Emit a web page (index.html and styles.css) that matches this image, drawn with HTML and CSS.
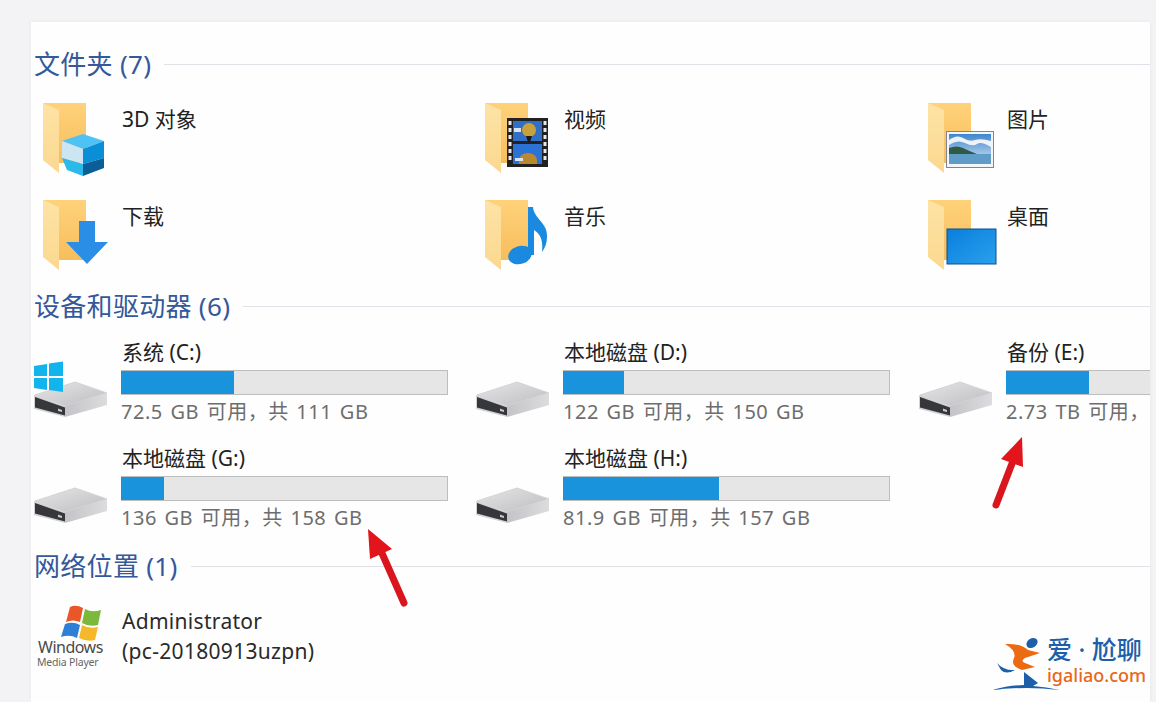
FILE: index.html
```html
<!DOCTYPE html>
<html lang="zh-CN">
<head>
    <meta charset="UTF-8">
    <title>此电脑</title>
    <link rel="stylesheet" href="styles.css">
</head>
<body>
    <svg class="defs" aria-hidden="true">
        <defs>
            <linearGradient id="folder-back" x1="0" y1="0" x2="0" y2="1">
                <stop offset="0" stop-color="#ffd27a"/>
                <stop offset="1" stop-color="#f7bd5c"/>
            </linearGradient>
            <linearGradient id="folder-front" x1="0" y1="0" x2="0" y2="1">
                <stop offset="0" stop-color="#fde3a6"/>
                <stop offset="1" stop-color="#fbd88f"/>
            </linearGradient>
            <linearGradient id="screen" x1="0" y1="0" x2="1" y2="1">
                <stop offset="0" stop-color="#0a7fdc"/>
                <stop offset="1" stop-color="#2aa0ee"/>
            </linearGradient>
            <linearGradient id="sky" x1="0" y1="0" x2="0" y2="1">
                <stop offset="0" stop-color="#3f86cf"/>
                <stop offset="1" stop-color="#d6e6f2"/>
            </linearGradient>
            <linearGradient id="drive-top" x1="0" y1="0" x2="1" y2="1">
                <stop offset="0" stop-color="#e6e6e8"/>
                <stop offset="1" stop-color="#bdbdc1"/>
            </linearGradient>
            <linearGradient id="drive-side" x1="0" y1="0" x2="1" y2="0">
                <stop offset="0" stop-color="#c4c4c8"/>
                <stop offset="1" stop-color="#dcdcde"/>
            </linearGradient>
            <symbol id="folder" viewBox="0 0 88 80">
                <path d="M9 5H52V65H24Z" fill="url(#folder-back)"/>
                <path d="M9 5L25 12V75L9 62Z" fill="url(#folder-front)"/>
            </symbol>
            <symbol id="drive" viewBox="0 0 75 36">
                <path d="M1 14L41 1L73 12L31 25Z" fill="url(#drive-top)" stroke="#d4d4d6" stroke-linejoin="round"/>
                <path d="M31 25L73 12V24L31 36Z" fill="url(#drive-side)"/>
                <path d="M0 14L31 25V36L0 28Z" fill="#d2d2d4"/>
                <path d="M1 16L31 26.500V34.500L1 26.500Z" fill="#35373a"/>
                <path d="M24 27.500L28 29V31L24 30Z" fill="#c8c8c8"/>
            </symbol>
        </defs>
    </svg>

    <main class="panel">
        <h2 class="group-head"><span>文件夹 (7)</span></h2>
        <section class="folders">
            <div class="tile">
                <svg class="icon" viewBox="0 0 88 80">
                    <use href="#folder"/>
                    <path d="M28 43L49 36L70 43L49 51Z" fill="#4cc3f4"/>
                    <path d="M28 43L49 51V66L28 60Z" fill="#cbe6f2"/>
                    <path d="M49 51L70 43V60L49 66Z" fill="#0a8ed8"/>
                    <path d="M28 60L49 66V78L33 72Z" fill="#2bb9e9"/>
                    <path d="M49 66L70 60V70L49 78Z" fill="#0b5f99"/>
                </svg>
                <div class="name">3D 对象</div>
            </div>
            <div class="tile">
                <svg class="icon" viewBox="0 0 88 80">
                    <use href="#folder"/>
                    <rect x="31" y="20" width="41" height="49" fill="#23211f"/>
                    <rect x="37" y="23" width="29" height="20" fill="#2f6fc7"/>
                    <rect x="37" y="46" width="29" height="20" fill="#2a72d6"/>
                    <circle cx="53" cy="32" r="7" fill="#c9a13c"/>
                    <path d="M50 38H56L54 44H52Z" fill="#1d1a14"/>
                    <path d="M43 62a9 7 0 0 1 18 0V66H43Z" fill="#b8892f"/>
                    <path d="M38 30h7v4h-7zM39 60h8v3h-8z" fill="#d9e4ef"/>
                    <path d="M32.500 23h3v4h-3zM32.500 30h3v4h-3zM32.500 37h3v4h-3zM32.500 44h3v4h-3zM32.500 51h3v4h-3zM32.500 58h3v4h-3zM67.500 23h3v4h-3zM67.500 30h3v4h-3zM67.500 37h3v4h-3zM67.500 44h3v4h-3zM67.500 51h3v4h-3zM67.500 58h3v4h-3z" fill="#e8e8e8"/>
                </svg>
                <div class="name">视频</div>
            </div>
            <div class="tile">
                <svg class="icon" viewBox="0 0 88 80">
                    <use href="#folder"/>
                    <rect x="27.500" y="33.500" width="47" height="36" fill="#f4f5f7" stroke="#7d8594"/>
                    <rect x="30" y="36" width="42" height="30" fill="url(#sky)"/>
                    <path d="M30 47q8-6 16-2t12 1 14 3v-6q-10-3-16-1t-12-2-14 2Z" fill="#eef3f7"/>
                    <path d="M30 50q8-3 14 0t14 6H30Z" fill="#2f5a43"/>
                    <rect x="30" y="56" width="42" height="10" fill="#5f9cc7"/>
                </svg>
                <div class="name">图片</div>
            </div>
            <div class="tile">
                <svg class="icon" viewBox="0 0 88 80">
                    <use href="#folder"/>
                    <path d="M45 26H61V47H74L53 69L32 47H45Z" fill="#2a8de6"/>
                </svg>
                <div class="name">下载</div>
            </div>
            <div class="tile">
                <svg class="icon" viewBox="0 0 88 80">
                    <use href="#folder"/>
                    <ellipse cx="44" cy="60" rx="12" ry="9" transform="rotate(-18 44 60)" fill="#1a8ae0"/>
                    <path d="M52 12H57C58 24 72 28 71 42C71 48 69 53 66 57C67 48 66 40 58 35V60H52Z" fill="#1a8ae0"/>
                </svg>
                <div class="name">音乐</div>
            </div>
            <div class="tile">
                <svg class="icon" viewBox="0 0 88 80">
                    <use href="#folder"/>
                    <rect x="28" y="34" width="49" height="35" fill="url(#screen)" stroke="#0b4f8f"/>
                </svg>
                <div class="name">桌面</div>
            </div>
        </section>

        <h2 class="group-head"><span>设备和驱动器 (6)</span></h2>
        <section class="drives">
            <div class="tile">
                <svg class="icon" viewBox="0 0 88 80">
                    <use href="#drive" y="41" width="75" height="36"/>
                    <path d="M0 26L13 24V36H0ZM15 23.500L29 21.500V36H15ZM0 38H13V50L0 48ZM15 38H29V52L15 50Z" fill="#12b4ee"/>
                </svg>
                <div class="info">
                    <div class="drive-name">系统 (C:)</div>
                    <div class="bar"><div class="used" style="width: 34.600%"></div></div>
                    <div class="free">72.5 GB 可用，共 111 GB</div>
                </div>
            </div>
            <div class="tile">
                <svg class="icon" viewBox="0 0 88 80"><use href="#drive" y="41" width="75" height="36"/></svg>
                <div class="info">
                    <div class="drive-name">本地磁盘 (D:)</div>
                    <div class="bar"><div class="used" style="width: 18.600%"></div></div>
                    <div class="free">122 GB 可用，共 150 GB</div>
                </div>
            </div>
            <div class="tile">
                <svg class="icon" viewBox="0 0 88 80"><use href="#drive" y="41" width="75" height="36"/></svg>
                <div class="info">
                    <div class="drive-name">备份 (E:)</div>
                    <div class="bar"><div class="used" style="width: 25.400%"></div></div>
                    <div class="free">2.73 TB 可用，</div>
                </div>
            </div>
            <div class="tile">
                <svg class="icon" viewBox="0 0 88 80"><use href="#drive" y="41" width="75" height="36"/></svg>
                <div class="info">
                    <div class="drive-name">本地磁盘 (G:)</div>
                    <div class="bar"><div class="used" style="width: 13.100%"></div></div>
                    <div class="free">136 GB 可用，共 158 GB</div>
                </div>
            </div>
            <div class="tile">
                <svg class="icon" viewBox="0 0 88 80"><use href="#drive" y="41" width="75" height="36"/></svg>
                <div class="info">
                    <div class="drive-name">本地磁盘 (H:)</div>
                    <div class="bar"><div class="used" style="width: 47.700%"></div></div>
                    <div class="free">81.9 GB 可用，共 157 GB</div>
                </div>
            </div>
        </section>

        <h2 class="group-head"><span>网络位置 (1)</span></h2>
        <section class="network">
            <div class="tile">
                <svg class="icon" viewBox="0 0 88 80">
                    <path d="M36 7Q42 4 49 8L46 22Q39 19 32 22Z" fill="#e8562a"/>
                    <path d="M51 9Q58 13 67 10L64 25Q55 27 48 23Z" fill="#7cb83c"/>
                    <path d="M31 24Q39 21 46 25L43 38Q36 34 27 37Z" fill="#2e7fd6"/>
                    <path d="M48 25Q55 29 64 27L61 40Q53 42 45 38Z" fill="#f5b82a"/>
                    <text class="wmp-big" x="4" y="53">Windows</text>
                    <text class="wmp-small" x="3" y="66">Media Player</text>
                </svg>
                <div class="name net-name">Administrator<br>(pc-20180913uzpn)</div>
            </div>
        </section>
    </main>

    <svg class="arrow arrow-g" viewBox="0 0 50 80">
        <path d="M14 22L37 74" class="shaft"/>
        <path d="M1 0L25 20L3 30Z" fill="#e2141c"/>
    </svg>
    <svg class="arrow arrow-e" viewBox="0 0 40 75">
        <path d="M24 24L7 68" class="shaft"/>
        <path d="M33 0L12 22L34 30Z" fill="#e2141c"/>
    </svg>

    <div class="logo">
        <svg class="logo-mark" viewBox="0 0 70 58">
            <ellipse cx="40" cy="7" rx="6" ry="4.500" transform="rotate(-35 40 7)" fill="#1d5fa8"/>
            <path d="M13 8Q28 7 36 14L48 17L33 22Q28 25 33 27L43 31L30 34Q18 30 22 22Q25 15 13 8Z" fill="#ec6a12"/>
            <path d="M5 27Q12 35 23 34Q14 39 9 34Z" fill="#1d5fa8"/>
            <path d="M32 36L46 47L41 50Q54 51 68 54Q50 52 35 52Q15 52 0 54Q18 49 32 49Z" fill="#1d5fa8"/>
        </svg>
        <div class="logo-text">
            <div class="logo-cn">爱 · 尬聊</div>
            <div class="logo-en">igaliao.com</div>
        </div>
    </div>
</body>
</html>
```

FILE: styles.css
```css
html, body {
    margin: 0;
    height: 100%;
}

body {
    position: relative;
    overflow: hidden;
    background-color: #f3f3f5;
    font-family: "Noto Sans", "Noto Sans CJK SC", sans-serif;
}

.defs {
    position: absolute;
    width: 0;
    height: 0;
}

.panel {
    box-sizing: border-box;
    width: 1119px;
    height: 680px;
    margin: 22px 0 0 31px;
    padding: 27px 0 0 3px;
    overflow: hidden;
    background-color: #fefefe;
    box-shadow: 0 0 4px rgba(0, 0, 0, 0.05);
}

.group-head {
    display: flex;
    align-items: center;
    gap: 13px;
    height: 30px;
    margin: 0;
    color: #34589a;
    font-size: 26px;
    font-weight: 400;
    letter-spacing: 0.3px;
    line-height: 30px;
    white-space: nowrap;
}

.group-head::after {
    content: "";
    flex: 1;
    height: 1px;
    margin-top: 1px;
    background-color: #dfe3e8;
}

.folders, .drives {
    display: grid;
    grid-template-columns: 442px 443px 443px;
}

.folders {
    grid-template-rows: 97px 96px;
    margin-top: 19px;
}

.drives {
    grid-template-rows: 106px 105px;
    margin-top: 19px;
}

.network {
    margin-top: 19px;
}

.tile {
    display: flex;
    align-items: flex-start;
    min-width: 0;
}

.icon {
    flex: none;
    width: 88px;
    height: 80px;
}

.name {
    padding-top: 6px;
    color: #222;
    font-size: 21px;
    line-height: 30px;
}

.net-name {
    color: #2a2a2a;
    letter-spacing: 0.3px;
}

.info {
    flex: none;
    width: 327px;
    margin-left: -1px;
}

.drive-name {
    padding: 1px 0 0 1px;
    color: #222;
    font-size: 21px;
    line-height: 22px;
}

.bar {
    box-sizing: border-box;
    height: 25px;
    margin: 7px 0 4px;
    background-color: #e6e6e6;
    border: 1px solid #bdbdbd;
    border-left: none;
}

.used {
    height: 100%;
    background-color: #1a93dd;
}

.free {
    padding-top: 1px;
    color: #6d6d6d;
    font-size: 20px;
    letter-spacing: 0.5px;
    word-spacing: 2px;
    line-height: 24px;
    white-space: nowrap;
}

.wmp-big {
    fill: #4a4a4a;
    font-size: 16px;
    letter-spacing: -0.5px;
}

.wmp-small {
    fill: #666;
    font-size: 10.500px;
    letter-spacing: -0.2px;
}

.arrow {
    position: absolute;
}

.shaft {
    fill: none;
    stroke: #d9161e;
    stroke-width: 7;
    stroke-linecap: round;
}

.arrow-g {
    left: 367px;
    top: 529px;
    width: 50px;
    height: 80px;
}

.arrow-e {
    left: 989px;
    top: 437px;
    width: 40px;
    height: 75px;
}

.logo {
    position: absolute;
    left: 992px;
    top: 636px;
    display: flex;
}

.logo-mark {
    flex: none;
    width: 70px;
    height: 58px;
}

.logo-text {
    margin: -2px 0 0 -15px;
}

.logo-cn {
    color: #1d5fa8;
    font-size: 25px;
    font-weight: 500;
    line-height: 30px;
    white-space: nowrap;
}

.logo-en {
    color: #e8681a;
    font-size: 18px;
    font-weight: 500;
    line-height: 23px;
    white-space: nowrap;
}
```
